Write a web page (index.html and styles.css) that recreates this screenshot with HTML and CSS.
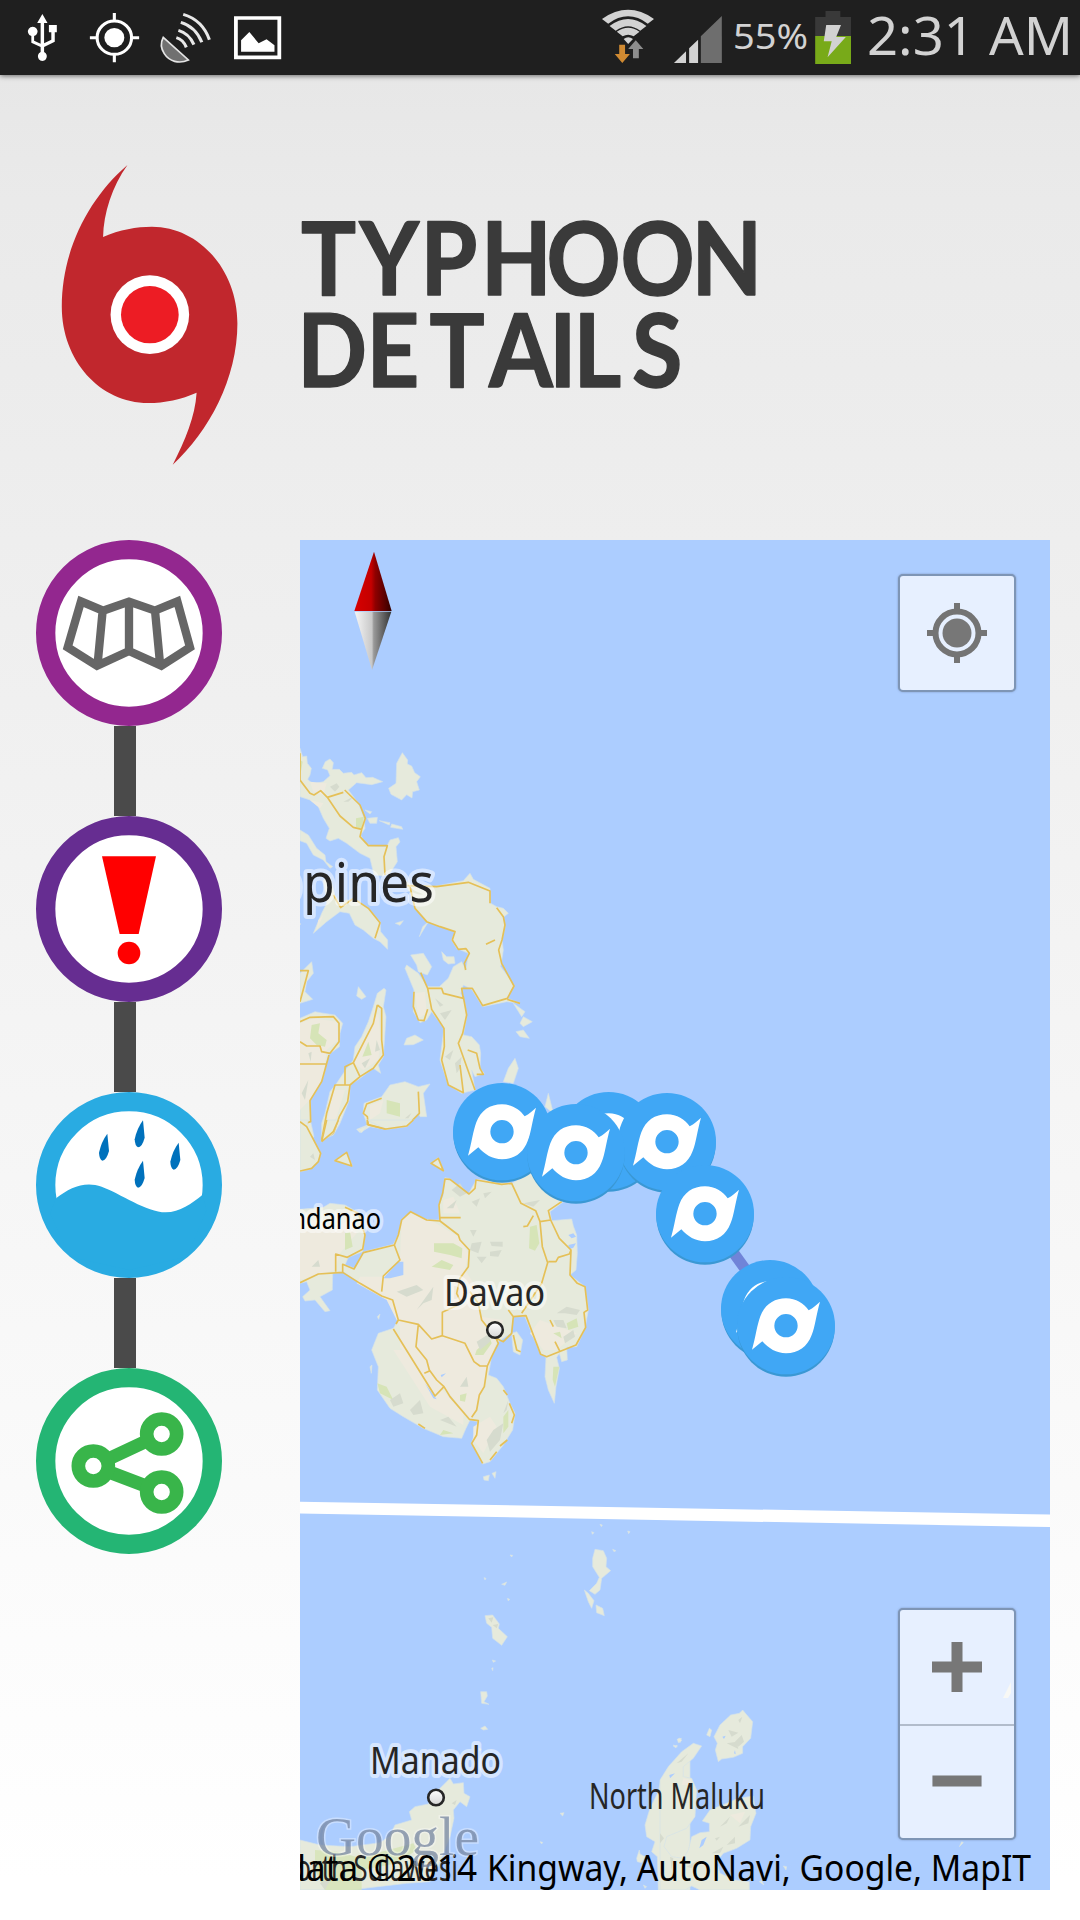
FILE: index.html
```html
<!DOCTYPE html>
<html lang="en">
<head>
<meta charset="utf-8">
<title>Typhoon Details</title>
<link rel="stylesheet" href="styles.css">
</head>
<body>
<div class="screen">
  <div class="status">
    <svg class="status-left" viewBox="0 0 300 75">
      <g transform="scale(.3444 .3333)" fill="#fff" stroke="none">
        <path d="M123 42L138 69H128V130L149 119V97H142V75H165V97H159V125L128 141V156A13 14 0 1 1 118 156V141L91 128V108A14 14 0 1 1 99 108V122L118 131V69H108Z"/>
        <g fill="none" stroke="#fff" stroke-width="9"><circle cx="332" cy="113" r="50"/><path d="M332 39V63M332 163V187M261 113H282M382 113H404"/></g>
        <circle cx="332" cy="113" r="29"/>
        <path d="M474 112L547 180C520 193 491 184 477 161C467 145 467 126 474 112Z" fill="#707070" stroke="#e4e4e4" stroke-width="5"/>
        <g fill="none" stroke="#e8e8e8" stroke-width="9"><path d="M512 113Q532 119 541 142M518 91Q549 100 563 134M525 67Q568 80 586 127M532 43Q588 60 608 119"/></g>
        <path d="M685 54H811V172H685Z" fill="none" stroke="#fff" stroke-width="11"/>
        <path d="M700 155V121L724 96L751 130L774 118L797 136V155Z"/>
      </g>
    </svg>
    <svg class="status-right" viewBox="590 0 490 75">
      <g transform="translate(540) scale(.3444 .3333)" fill="#d2d2d2">
        <path d="M180 57Q256 2 331 57L313 71Q256 27 198 71ZM202 78Q256 36 309 78L291 92Q256 65 220 92ZM223 95Q256 72 289 95L272 109Q256 99 240 109ZM243 117Q256 107 270 117L256 132Z"/>
        <path d="M230 134H247V162H261L239 189L217 162H230Z" fill="#d08a32"/>
        <path d="M278 121L300 147H287V175H270V147H256Z" fill="#8d8d8d"/>
        <path d="M389 189L424 154V189ZM433 145L459 119V189H433Z"/>
        <path d="M467 109L528 48V189H467Z" fill="#6e6e6e"/>
        <path d="M829 33H872V51H903V109H799V51H829Z" fill="#393939"/>
        <path d="M799 108H903V192H799Z" fill="#78aa19"/>
        <path d="M831 75H874L860 111H888L835 172L847 124H824Z"/>
      </g>
      <text x="733" y="49" font-size="35" textLength="75" lengthAdjust="spacingAndGlyphs">55%</text>
      <text x="867" y="55" font-size="53" textLength="206" lengthAdjust="spacingAndGlyphs">2:31 AM</text>
    </svg>
  </div>

  <header class="header">
    <svg class="logo" viewBox="50 150 200 330">
      <g transform="translate(20 140) scale(.4975 .3333)">
        <path d="M216 75C185 140 168 220 167 291C200 269 235 260 265 260C360 260 437 390 437 550C437 715 380 875 307 974C332 900 352 830 355 758C325 778 290 789 258 789C160 789 84 660 84 500C84 330 138 175 216 75Z" fill="#c1272d"/>
        <ellipse cx="261" cy="524" rx="79" ry="118" fill="#fff"/>
        <ellipse cx="261" cy="524" rx="58" ry="86" fill="#ed1c24"/>
      </g>
    </svg>
    <svg class="title" viewBox="290 200 490 210">
      <g transform="translate(300) scale(.9 1)">
        <text y="295" x="1 66 134 201 274 356 435">TYPHOON</text>
        <text y="387" x="-3 74 144 210 277 304 369">DETAILS</text>
      </g>
    </svg>
  </header>

  <main class="content">
    <nav class="rail">
      <svg class="node" viewBox="48 60 558 558">
        <circle cx="327" cy="339" r="250" fill="#fff" stroke="#93278f" stroke-width="58"/>
        <path d="M183 244L249 272L327 245L405 272L472 244L510 382L424 437L327 393L231 437L143 382ZM248 272L233 430M327 245V393M405 272L420 430" fill="none" stroke="#666" stroke-width="25"/>
      </svg>
      <div class="link"></div>
      <svg class="node" viewBox="48 888 558 558">
        <circle cx="327" cy="1167" r="250" fill="#fff" stroke="#662d91" stroke-width="58"/>
        <path d="M246 1009H408L356 1242H299Z" fill="red"/><circle cx="327" cy="1299" r="34" fill="red"/>
      </svg>
      <div class="link"></div>
      <svg class="node" viewBox="48 66 558 558">
        <circle cx="327" cy="345" r="250" fill="#fff" stroke="#29abe2" stroke-width="58"/>
        <path d="M109 384C150 352 195 332 245 350C300 370 380 427 437 427C480 427 515 400 547 375L560 420L500 560L327 600L150 560L90 430Z" fill="#29abe2"/>
        <g fill="#0071bc"><path id="drop" d="M262 191L267 243Q259 272 247 272Q238 268 237 248Q244 215 262 191Z"/><use href="#drop" x="107" y="-40"/><use href="#drop" x="107" y="81"/><use href="#drop" x="214" y="27"/></g>
      </svg>
      <div class="link"></div>
      <svg class="node" viewBox="48 894 558 558">
        <circle cx="327" cy="1173" r="250" fill="#fff" stroke="#24b574" stroke-width="58"/>
        <path d="M425 1092L220 1188L425 1266" fill="none" stroke="#39b54a" stroke-width="40"/>
        <g fill="#fff" stroke="#39b54a" stroke-width="41"><circle cx="425" cy="1092" r="45"/><circle cx="220" cy="1188" r="45"/><circle cx="425" cy="1266" r="45"/></g>
      </svg>
    </nav>

    <section class="map">
      <svg class="tiles" viewBox="300 540 750 1350">
        <defs>
          <linearGradient id="needleRed"><stop offset="0" stop-color="#d80000"/><stop offset=".45" stop-color="#c40000"/><stop offset=".56" stop-color="#8f0000"/><stop offset="1" stop-color="#300"/></linearGradient>
          <linearGradient id="needleGrey"><stop offset="0" stop-color="#f6f6f6"/><stop offset=".47" stop-color="#c8c8c8"/><stop offset=".52" stop-color="#999"/><stop offset="1" stop-color="#333"/></linearGradient>
          <linearGradient id="town" x2="0" y2="1"><stop offset="0" stop-color="#fff"/><stop offset="1" stop-color="#d5d5d5"/></linearGradient>
          <g id="storm">
            <circle cy="4" r="146" fill="#3a98d4"/>
            <ellipse cy="-3" rx="147" ry="146" fill="#40a7f5"/>
            <path fill-rule="evenodd" d="M102 -75C91 -37 87 2 77 25C64 60 37 80 0 80C-28 80 -53 65 -71 44L-102 69C-91 32 -87 -5 -77 -31C-64 -66 -36 -85 0 -85C30 -85 54 -69 68 -49C82 -56 92 -66 102 -75ZM35 -3A35 35 0 1 0 -35 -3A35 35 0 1 0 35 -3Z" fill="#fff"/>
          </g>
        </defs>

        <!-- Visayas -->
        <g transform="translate(290 740) scale(.33333)">
          <g class="land">
            <path d="M30 25L38 50L50 48L52 70L64 85L60 105L53 118L68 132L100 125L120 107L113 90L97 85L106 65L120 57L130 68L127 88L148 88L160 100L185 97L192 105L215 98L228 113L248 112L278 125L245 134L200 128L175 150L205 190L222 235L225 265L212 285L225 310L245 318L290 320L300 300L325 293L330 306L318 320L322 365L300 400L280 408L252 405L240 355L210 340L170 310L145 295L120 303L108 295L118 265L100 235L85 200L60 180L30 170Z"/>
            <path d="M70 580L95 520L110 490L100 420L120 410L135 465L150 490L170 480L200 480L240 510L270 545L272 575L293 600V628L270 605L250 595L220 570L195 555L178 520L150 515L110 545Z"/>
            <path d="M30 270L55 285L80 325L105 345L108 365L128 380L120 385L100 360L70 345L50 310L30 302Z"/>
            <path d="M337 38L353 60L352 72L365 78L374 98L391 110L380 125L388 150L368 155L366 174L350 164L335 180L303 163L296 145L318 130L320 70Z"/>
            <path d="M320 400L360 432L430 440L470 432L520 422L540 400L550 418L600 445L602 490L620 500L640 505L655 520L640 532L645 560L636 600L640 630L632 680L655 710L672 738L652 775L690 790L650 785L578 800L545 748L520 735L512 760L524 790L530 830L520 885L545 890L568 915L572 940L570 985L583 1000L555 1010L545 990L555 1050L515 1060L475 1035L450 960L462 865L425 815L410 840L390 848L370 815L372 750L345 685L350 675L385 700L412 740L448 740L475 715L490 680L515 665L528 690L535 640L500 625L485 600L495 575L450 560L410 545L375 505L362 460Z"/>
            <path d="M362 645L400 640L425 680L412 705L385 695L380 675Z"/>
            <path d="M282 745L288 750L280 800L288 830L280 950L265 975L272 1000L250 985L210 1015L180 1035L178 1080L150 1150L130 1185L95 1200L95 1150L105 1120L120 1055L140 1030L170 985L190 960L195 920L215 890L235 845L250 800L262 760Z"/>
            <path d="M30 835L75 815L90 818L135 825L158 850L150 880L148 920L115 945L100 1010L80 1050L60 1080L62 1145L72 1190L60 1200H30Z"/>
            <path d="M30 700L65 665L70 700L50 725L45 755L68 778L30 790Z"/>
            <path d="M220 1120L222 1090L275 1070L300 1035L345 1025L385 1040L420 1032L400 1060L410 1130L390 1130L385 1120L350 1158L285 1168L240 1160L210 1178L200 1168L232 1155Z"/>
            <path d="M342 915L350 895L375 885L400 900L370 914ZM205 740L228 770L215 778L200 768ZM455 635L470 650L492 650L495 670L475 672L460 660ZM640 1025L655 985L675 955L685 985L670 1030ZM765 1100L775 1060L790 1120ZM225 210L245 215L240 222ZM232 235L262 232L260 250L240 250ZM268 242L300 248L298 255ZM305 252L335 260L338 268L302 262ZM316 550L340 542L330 556ZM388 590L398 560L415 545L400 570ZM670 790L705 815L695 830ZM700 830L727 845L700 860L690 850ZM678 875L700 870L718 895L690 890ZM30 555L32 550Z"/>
          </g>
          <g class="sand"><path d="M60 125L110 130L100 165L70 155ZM60 180L100 190L90 205ZM30 850L70 835L140 845L145 900L110 930L100 1010L60 1080L30 1110ZM240 860L265 820L272 900L265 960L220 990L190 970ZM130 1050L165 1050L140 1130L105 1180ZM240 1095L280 1080L270 1120L240 1140ZM375 760L405 755L410 820L385 835ZM85 540L100 525L80 570Z"/></g>
          <g class="park"><path d="M65 855L90 850L85 880L110 900L105 920L80 915L60 895ZM235 905L245 945L217 950ZM290 1080L330 1090V1130L290 1120ZM198 235L222 230L215 268L198 260ZM30 60L38 65L32 100Z"/></g>
          <g class="relief"><path d="M120 140L140 130L148 140L135 155ZM160 185L190 170L175 185ZM435 775L460 795L450 800ZM450 820L485 810L465 840ZM465 950L490 930L480 960ZM495 970L515 950L510 985L500 1000ZM215 970L240 955L225 985ZM345 1135L365 1118L355 1135ZM260 900L270 930L255 935ZM35 1060L55 1020L45 1080ZM55 940L65 935L62 965Z"/></g>
          <g class="road"><path d="M30 40V120L60 160L72 165L92 152L112 172L150 228L190 262L215 268L226 235L210 195L164 150M112 172L160 157M215 268L210 290L235 317H292L282 350L285 405M130 465L152 503L190 475L235 505L270 548L255 595M352 437L440 440L535 427L600 453V490M360 440L375 505L410 545L450 560L495 575L487 600L505 628L528 626L538 640L523 670L527 690M588 613L615 600M620 503L640 530L645 555L636 600L626 630L635 670L672 738L652 775L578 797L547 745H515L520 775L460 760L455 745H413L392 698M413 745L425 808L462 865L463 920L455 960L475 1035L520 1058L510 975M520 770L530 825L518 880L505 910L555 1050M533 930L560 940L570 985L580 1003L560 1003M372 755L370 800L385 840L402 842L413 808M652 778L690 790M30 692H55L30 785M30 845L60 832L130 830L147 850V905L120 940L95 935L90 918L50 918L30 905M30 972H110M117 945L95 1025L60 1082L62 1145L45 1150M262 795L275 805V900L280 945L250 985L210 1010L180 1035L135 1035L110 1120L95 1200M262 795L250 850L190 968L165 980V1035M190 968L210 1010M180 1035L173 1085L148 1130L130 1180L95 1200M385 1055L388 1120L350 1158L285 1167L235 1155L232 1130L220 1120L230 1092L275 1075"/></g>
        </g>

        <!-- Mindanao -->
        <g transform="translate(290 1120) scale(.33333)">
          <g class="land">
            <path d="M465 173L480 176L535 222L560 178L665 190L720 160L820 245L780 275L785 302L845 297L850 318L860 345L862 400L858 450L840 465L885 500L895 570L885 625L860 680L830 682L832 720L815 725L808 700L800 712L808 745L798 800L793 850L775 810L765 770L768 712L750 700L705 590L670 590L662 640L625 665L605 710L595 765L620 775L640 800L660 850L675 880L668 930L640 975L600 1025L578 1032L545 970L563 905L540 900L528 925L515 955L460 950L400 925L340 890L300 865L262 810L265 740L245 690L265 640L310 625L325 600L310 540L275 528L210 490L160 455L128 460L127 510L90 530L120 572L105 575L75 540L45 543L38 530L60 510L50 485L30 490V268L100 262L120 250L165 255L200 275L225 340L218 395L175 412L165 435L195 445L222 395L310 373L325 345L335 300L362 275L410 300L448 300L447 255L460 225Z"/>
            <path d="M30 0H55L50 20L92 100L85 125L60 148L30 155ZM95 65L110 0H145L130 40ZM230 0H370L350 20L290 28ZM205 28L232 18L215 38ZM133 122L170 97L187 138ZM422 130L445 113L460 152ZM665 640L680 635L698 660L690 705L670 695ZM580 1070L598 1065L595 1082L582 1080ZM606 1060L618 1055L615 1075ZM262 590L270 582L266 598ZM240 740L246 735L244 760Z"/>
          </g>
          <g class="sand"><path d="M335 300L365 280L430 305L505 350L535 400L525 450L570 520L570 590L640 600L620 660L590 760L560 870L540 895L460 800L430 830L330 680L330 620L290 540L200 490L210 470L280 470L330 420ZM350 690L520 880L520 915L420 860L310 690ZM30 290L140 320L180 300L200 340L150 400L135 450L30 480ZM550 920L600 890L620 920L580 1000L550 960ZM720 640L750 600L860 640L800 690L760 690ZM460 240L490 230L510 280L460 280Z"/></g>
          <g class="park"><path d="M432 370H490L517 385L515 415L480 405L432 395ZM425 440L455 420L490 435L480 450ZM720 320L740 315L748 370L735 392L717 385ZM560 690L600 655L605 670L580 705L555 705ZM790 740L808 740L795 800L788 780ZM165 340L180 335L188 380L165 390ZM262 790L290 800L310 840L270 820ZM830 610L860 595L865 620L835 630ZM790 640L810 635L815 655ZM460 930L490 940L450 945ZM640 890L655 870L655 920L640 940ZM510 825L530 820L525 845L510 842Z"/></g>
          <g class="relief"><path d="M485 210L510 190L530 220L510 230ZM470 265L500 240L490 265ZM545 245L570 235L560 260ZM580 220L605 215L585 235ZM600 365H638V380L605 378ZM600 395L635 390L625 410L600 408ZM545 370L575 365L565 400L540 390ZM540 330L560 330L550 350ZM320 515L380 495L400 510L350 530ZM380 570L430 500L425 540L400 550ZM65 440L85 420L90 440ZM800 580L830 560L870 570L860 585L825 580ZM790 600L820 600L830 625L800 620ZM820 650L850 630L855 650L825 670ZM510 800L530 770L535 800ZM590 960L610 930L640 910L630 960L600 995ZM300 840L330 820L340 850L310 860ZM360 870L390 840L400 880L370 885ZM450 900L475 890L500 920ZM560 665L600 640L600 665L570 690ZM560 410L590 410L575 430ZM700 250L750 240L730 260ZM640 880L655 840L650 870ZM60 110L70 100L75 120Z"/></g>
          <path d="M280 475L325 425L340 425V465L300 475ZM405 790L440 838L430 835ZM452 765L468 760L455 772ZM835 345L850 340L858 350L845 355ZM835 375L858 370L850 383L838 388Z" fill="#accdff"/>
          <g class="road"><path d="M30 488L85 462L158 457L210 490L275 528L308 540L325 600L385 613L425 657L457 647L525 670L552 725L570 738H592M137 455V402L172 412L218 388L225 345L205 280L165 262M158 457V433L192 447L220 398L313 375L330 420L280 468L275 515M313 375L325 345L335 300L362 275L410 300L450 303L447 255L458 220L465 177L480 178L537 222L555 205L558 180L635 193L665 190L693 250L737 272L750 305L757 380L773 428L755 490L695 580M448 293H512M450 303L505 345L510 360L538 390L535 440L510 475L500 520L515 550L457 577V647M750 305L782 300L775 272L815 245M782 300L808 355L843 390L838 402L805 412L798 425H775M843 390L840 465L862 490L885 500L893 570L882 577L887 622L858 675L770 710L752 703L708 587L670 590L665 640L640 665L618 655L625 670L605 710L592 738L583 800L568 825L560 870L545 892M700 320L712 318L730 287M540 515L565 550L575 600L615 650M655 570L670 590M780 600L790 620M795 665L810 695M670 645L680 690L692 695M310 627L435 828L462 800L480 830L538 898L565 902L560 945L545 970L578 1030M325 600L318 612M385 613L378 680L410 720L418 750L440 780L462 800M403 760L420 752M600 1020L620 995M630 978L652 960M640 810L652 825M658 850L673 885L665 910M385 912L405 925M135 122L170 97L185 138ZM423 130L445 115L460 152ZM30 5L50 20L92 100L85 125L65 145L30 153M95 65L110 0M95 65L130 35L145 0M232 0V13L287 27L350 18L370 0"/></g>
        </g>

        <!-- Sulawesi -->
        <g transform="translate(290 1490) scale(.33333)">
          <g class="land">
            <path d="M915 178L940 182L950 205L948 230L962 242L935 265L930 300L915 313L898 302L920 280L928 262L908 230V205ZM883 300L895 310L912 332L905 355L895 335ZM918 345L938 355L943 377L920 368ZM585 377L608 375L628 402L625 415L652 440L635 466L608 445L605 412L590 400ZM572 605L590 605L592 618L582 635L597 643L575 640ZM572 715L585 708L593 718L580 720ZM1150 768L1162 766L1157 772ZM1162 748L1174 745L1170 758ZM635 283L650 276L645 286ZM930 103L937 105L934 110ZM905 125L912 128L907 133ZM1013 123L1020 125L1016 131ZM968 178L978 182L972 185ZM810 970L822 968L818 978ZM750 1055L758 1057L755 1062ZM652 325L659 328L655 333ZM582 263L588 265L585 270ZM660 195L668 196L665 201ZM607 510L617 513L610 517ZM605 535L609 533L608 542ZM566 775L574 777L570 783Z"/>
            <path d="M30 1050L90 1065L180 1070L270 1058L300 1038L315 1005L365 990L358 965L375 950L415 942L445 900L470 875L480 865L490 882L520 878L522 910L540 920L530 950L510 935L490 960L492 985L480 1040L460 1090L440 1140L420 1175L350 1180L290 1187L180 1200H30Z"/>
            <path d="M1200 772L1140 825L1112 870L1105 905L1080 955L1065 1005L1070 1040L1095 1055L1085 1085L1102 1100L1105 1200H1200ZM1040 1105L1048 1080L1050 1092L1065 1100L1055 1118L1042 1115ZM1060 1185L1070 1190L1065 1195Z"/>
          </g>
          <g class="park"><path d="M75 1080L140 1085L215 1105L275 1085L370 1060L380 1080L320 1120L215 1140V1200H105L75 1140Z" opacity=".85"/></g>
          <g class="relief"><path d="M90 1180L125 1160L105 1200ZM180 1165L210 1150L205 1170ZM485 940L500 930L495 945ZM595 385L610 382L605 398ZM608 405L625 402L620 415ZM1110 1035L1125 1020L1120 1045ZM1170 1140L1190 1130L1185 1150ZM1150 820L1180 795L1170 820Z"/></g>
        </g>

        <!-- Halmahera -->
        <g transform="translate(660 1560) scale(.33333)">
          <g class="land">
            <path d="M0 660L25 620L65 575L100 550L125 558L100 595L70 620V650L95 655L110 690L105 770L80 805L20 830L12 860L35 890L70 895L85 870L95 830L120 818L148 815V790L127 783L150 750L200 730L235 715L280 708L285 745L288 760L272 800L270 840L230 865L190 880L170 905L180 940L225 960L268 965V990H120L95 978L75 990H0Z"/>
            <path d="M248 450L258 462L278 485L272 535L248 560V580L220 592L185 597L175 605L166 570L172 550L162 530L180 495L212 465L238 460ZM140 525L148 505L155 510L150 530ZM40 555L52 560L46 563ZM52 538L60 534L65 542L55 548ZM298 965L305 962L312 975ZM370 918L380 920L378 930ZM898 860L905 845L910 848Z"/>
          </g>
          <g class="sand"><path d="M210 765L255 755L240 790ZM70 655L95 660L90 675H65Z"/></g>
          <g class="relief"><path d="M205 510L235 518L215 530ZM225 545L245 525L252 545L235 560ZM200 550L230 545L235 567ZM235 480L247 470L240 490ZM50 610L85 580L65 605ZM60 725L80 705L80 730ZM200 855L225 830L225 850ZM235 800L270 765L265 790ZM165 835L180 830L170 842ZM80 920L115 900L95 925ZM30 890L40 895L35 930ZM0 820L12 835L0 850ZM180 800L210 770L200 790ZM155 880L190 860L180 880Z"/></g>
          <path d="M187 530L197 527L192 537ZM28 645L45 640L30 655ZM225 570L227 583L222 580ZM125 840L140 830L130 855L118 865ZM40 930L48 926L45 935Z" fill="#accdff"/>
        </g>

        <path d="M300 1501.8L1050 1514.5V1527L300 1513.6Z" fill="#fff"/>

        <g class="label">
          <text y="902" font-size="54"><tspan x="162" textLength="140" lengthAdjust="spacingAndGlyphs">Philip</tspan><tspan x="303" textLength="131" lengthAdjust="spacingAndGlyphs">pines</tspan></text>
          <text x="261" y="1229" font-size="29" textLength="120" lengthAdjust="spacingAndGlyphs" fill="#000">Mindanao</text>
          <text x="444" y="1306" font-size="37.5" textLength="101" lengthAdjust="spacingAndGlyphs">Davao</text>
          <text x="370" y="1774" font-size="39" textLength="131" lengthAdjust="spacingAndGlyphs">Manado</text>
        </g>
        <g class="label plain">
          <text x="589" y="1809" font-size="37" textLength="176" lengthAdjust="spacingAndGlyphs">North Maluku</text>
          <text x="276" y="1881" font-size="37" textLength="182" lengthAdjust="spacingAndGlyphs">North Sulawesi</text>
        </g>
        <g fill="url(#town)" stroke="#262626" stroke-width="2.6"><circle cx="495" cy="1330" r="7.8"/><circle cx="436" cy="1797.5" r="7.8"/></g>

        <path d="M705 1213L776 1312" stroke="#7084d8" stroke-width="11"/>
        <g transform="translate(430 1060) scale(.33333)">
          <use href="#storm" x="216" y="218"/><use href="#storm" x="536" y="245"/><use href="#storm" x="711" y="248"/><use href="#storm" x="438" y="281"/><use href="#storm" x="825" y="464"/><use href="#storm" x="1020" y="749"/><use href="#storm" x="1068" y="800"/>
        </g>

        <g transform="translate(290 530) scale(.33333)">
          <path d="M252 65L305 243H193Z" fill="url(#needleRed)"/>
          <path d="M194 245H304L246 420Z" fill="url(#needleGrey)"/>
        </g>

        <text class="brand" x="316" y="1855" textLength="163" lengthAdjust="spacingAndGlyphs">Google</text>
        <g class="credit">
          <text x="202" y="1881" textLength="275" lengthAdjust="spacingAndGlyphs">Map data ©2014</text>
          <text x="487" y="1881" textLength="544" lengthAdjust="spacingAndGlyphs">Kingway, AutoNavi, Google, MapIT</text>
        </g>
      </svg>
      <div class="controls">
        <div class="control">
          <svg viewBox="-57 -57 114 114"><g fill="none" stroke="#747474" stroke-width="6"><circle r="21.5"/><path d="M0 -30V-20M0 30V20M-30 0H-20M30 0H20"/></g><circle r="14.5" fill="#777"/></svg>
        </div>
        <div class="control zoom">
          <svg viewBox="-57 -57 114 114"><path d="M-25 0H25M0 -25V25" stroke="#777" stroke-width="11"/><path d="M46 31L51 21L54 15V26L51 31Z" fill="#f8f8f5"/></svg>
          <svg class="out" viewBox="-57 -56 114 114"><path d="M-25 0H25" stroke="#777" stroke-width="11"/></svg>
        </div>
      </div>
    </section>
  </main>
</div>
</body>
</html>
```
FILE: styles.css
```css
* { box-sizing: border-box; }
body { margin: 0; }
svg { display: block; }
.screen {
  width: 1080px;
  height: 1920px;
  overflow: hidden;
  background: linear-gradient(#e7e7e7 75px, #eaeaea 200px, #eee 540px, #f5f5f5 1100px, #fbfbfb 1560px, #fff 1880px);
}
.status {
  display: flex;
  justify-content: space-between;
  height: 75px;
  background: #1f1f1f;
  box-shadow: 0 1px 5px rgba(0, 0, 0, .55);
  font-family: "Noto Sans", sans-serif;
}
.status-left { width: 300px; height: 75px; }
.status-right { width: 490px; height: 75px; fill: #d2d2d2; }
.header {
  display: flex;
  gap: 40px;
  height: 465px;
  padding: 75px 0 0 50px;
}
.logo { width: 200px; height: 330px; }
.title {
  width: 490px;
  height: 210px;
  margin-top: 50px;
  font-family: Lato, sans-serif;
  font-size: 102px;
  font-weight: 700;
  fill: #3a3a3a;
  stroke: #3a3a3a;
  stroke-width: 1.5;
  stroke-linejoin: round;
}
.content {
  display: grid;
  grid-template-columns: 186px 750px;
  column-gap: 78px;
  padding-left: 36px;
}
.rail { display: flex; flex-direction: column; }
.node { width: 186px; height: 186px; }
.link { width: 22px; height: 90px; margin-left: 78px; background: #4a4a4a; }
.map {
  position: relative;
  width: 750px;
  height: 1350px;
  overflow: hidden;
  background: #accdff;
}
.tiles { width: 750px; height: 1350px; }
.land { fill: #e6eadc; stroke: #d4e2e8; stroke-width: 2; stroke-linejoin: round; }
.sand { fill: #eeeade; }
.park { fill: #d6e4b7; }
.relief { fill: #d6dbce; }
.road { fill: none; stroke: #e5c057; stroke-width: 5; stroke-linejoin: round; }
.label {
  font-family: "Noto Sans", sans-serif;
  fill: #262626;
  stroke: rgba(255, 255, 255, .5);
  stroke-width: 8px;
  stroke-linejoin: round;
  paint-order: stroke;
}
.plain { stroke: none; }
.brand {
  font-family: "Liberation Serif", serif;
  font-size: 55px;
  fill: #6d7f9b;
  fill-opacity: .7;
  stroke: rgba(255, 255, 255, .35);
  stroke-width: 3px;
  paint-order: stroke;
}
.credit { font-family: "Noto Sans", sans-serif; font-size: 37px; fill: #000; }
.controls {
  position: absolute;
  top: 34px;
  right: 34px;
  display: flex;
  flex-direction: column;
  justify-content: space-between;
  width: 118px;
  height: 1266px;
}
.control {
  border: 2px solid #7e95b5;
  border-radius: 5px;
  background: #e7f0ff;
  box-shadow: 0 0 2px rgba(70, 90, 120, .5);
}
.control svg { width: 114px; height: 114px; }
.zoom .out { border-top: 2px solid #b2bccb; }
```
